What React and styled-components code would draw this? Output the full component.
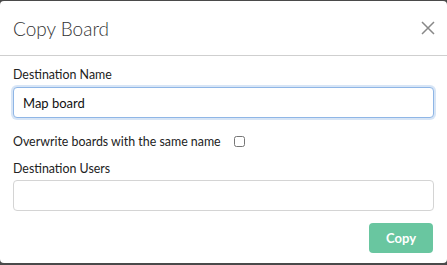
import React from 'react'
import styled, { createGlobalStyle } from 'styled-components'

const GlobalStyle = createGlobalStyle`
  html, body {
    margin: 0;
    padding: 0;
    background: #4a4a4a;
    font-family: Lato, "Open Sans", sans-serif;
  }
  * { box-sizing: border-box; }
`

const Modal = styled.div`
  margin-top: 1px;
  width: 447px;
  height: 262px;
  background: #fff;
  border-radius: 4px;
  display: flex;
  flex-direction: column;
`

const Header = styled.div`
  height: 55px;
  padding: 0 11px 0 13px;
  display: flex;
  align-items: center;
  justify-content: space-between;
  border-bottom: 1px solid #cfcfcf;
  h2{
    margin: 0;
    font-size: 19px;
    font-weight: 300;
    color: #333;
    padding-top: 1px;
  }
`

const Close = styled.button`
  border: 0;
  background: none;
  padding: 0;
  width: 16px;
  height: 16px;
  display: flex;
  cursor: pointer;
`

const Body = styled.div`
  padding: 11px 13px 0;
  display: flex;
  flex-direction: column;
`

const Label = styled.label`
  font-size: 12.4px;
  color: #222;
  line-height: 16px;
  margin-bottom: ${p => p.gap}px;
`

const Input = styled.input`
  width: 421px;
  height: 31px;
  border-radius: 4px;
  border: 1px solid ${p => p.focused ? '#8fb6e6' : '#d4d4d4'};
  box-shadow: ${p => p.focused ? '0 0 0 2px rgba(140, 180, 230, 0.35)' : 'none'};
  padding: 0 9px;
  font-family: Lato, sans-serif;
  font-size: 13px;
  color: #111;
  outline: none;
`

const CheckRow = styled.div`
  display: flex;
  align-items: center;
  gap: 13px;
  height: 16px;
  margin: 15px 0 12px;
  font-size: 12.4px;
  color: #222;
  input{
    margin: 0;
    width: 11px;
    height: 11px;
  }
`

const Footer = styled.div`
  display: flex;
  justify-content: flex-end;
  padding: 12px 14px 0;
`

const Button = styled.button`
  width: 64px;
  height: 30px;
  border: 0;
  border-radius: 4px;
  background: #69c6a0;
  color: #fff;
  font-family: Lato, sans-serif;
  font-weight: 700;
  font-size: 13px;
`

const App = () => {
    return (
        <>
            <GlobalStyle/>
            <Modal>
                <Header>
                    <h2>Copy Board</h2>
                    <Close>
                        <svg width="16" height="16" viewBox="0 0 16 16">
                            <path d="M2 2L14 14M14 2L2 14" stroke="#888" strokeWidth="1.5"/>
                        </svg>
                    </Close>
                </Header>
                <Body>
                    <Label gap={4}>Destination Name</Label>
                    <Input focused defaultValue="Map board"/>
                    <CheckRow>
                        <span>Overwrite boards with the same name</span>
                        <input type="checkbox"/>
                    </CheckRow>
                    <Label gap={3}>Destination Users</Label>
                    <Input/>
                </Body>
                <Footer>
                    <Button>Copy</Button>
                </Footer>
            </Modal>
        </>
    )
}

export default App
